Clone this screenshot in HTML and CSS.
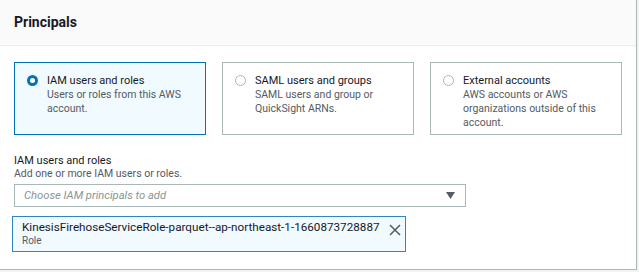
FILE: index.html
```html
<!DOCTYPE html>
<html>
<head>
<meta charset="utf-8">
<link rel="stylesheet" href="styles.css">
</head>
<body>
<div class="panel">
  <div class="header"><h2 class="title">Principals</h2></div>
  <div class="content">
    <div class="tiles">
      <div class="tile selected">
        <span class="radio on"></span>
        <div class="tile-text">
          <div class="tile-title">IAM users and roles</div>
          <div class="tile-desc">Users or roles from this AWS account.</div>
        </div>
      </div>
      <div class="tile">
        <span class="radio"></span>
        <div class="tile-text">
          <div class="tile-title">SAML users and groups</div>
          <div class="tile-desc">SAML users and group or QuickSight ARNs.</div>
        </div>
      </div>
      <div class="tile">
        <span class="radio"></span>
        <div class="tile-text">
          <div class="tile-title">External accounts</div>
          <div class="tile-desc">AWS accounts or AWS organizations outside of this account.</div>
        </div>
      </div>
    </div>
    <div class="field">
      <div class="label">IAM users and roles</div>
      <div class="hint">Add one or more IAM users or roles.</div>
      <div class="select">
        <span class="placeholder">Choose IAM principals to add</span>
        <svg class="caret" width="9" height="7" viewBox="0 0 9 7"><path d="M0 0H9L4.5 7Z" fill="#545b64"/></svg>
      </div>
      <div class="token">
        <div class="token-text">
          <div class="token-name">KinesisFirehoseServiceRole-parquet--ap-northeast-1-1660873728887</div>
          <div class="token-sub">Role</div>
        </div>
        <svg class="close" width="12" height="12" viewBox="0 0 12 12"><path d="M1 1L11 11M11 1L1 11" stroke="#545b64" stroke-width="1.5" fill="none"/></svg>
      </div>
    </div>
  </div>
</div>
</body>
</html>
```
FILE: styles.css
```css
* { box-sizing: border-box; }
html, body { margin: 0; padding: 0; }
body {
  background: #f2f3f3;
  font-family: Roboto, "Noto Sans", sans-serif;
  color: #16191f;
  width: 639px;
  height: 272px;
  overflow: hidden;
}
.panel {
  width: 637px;
  height: 270px;
  background: #fff;
  border-right: 1px solid #aab7b8;
  border-bottom: 1px solid #aab7b8;
}
.header {
  height: 46px;
  background: #fafafa;
  border-bottom: 1px solid #eaeded;
  display: flex;
  align-items: center;
  padding-left: 14px;
  padding-bottom: 2px;
}
.title {
  margin: 0;
  font-size: 14px;
  font-weight: 700;
}
.content {
  padding: 16px 14px 0 14px;
}
.tiles {
  display: flex;
  gap: 16px;
}
.tile {
  width: 192px;
  height: 73px;
  border: 1px solid #aab7b8;
  display: flex;
  gap: 9px;
  padding: 11px 10px 0 12px;
}
.tile.selected {
  background: #f1faff;
  border-color: #0073bb;
}
.radio {
  flex: none;
  width: 11px;
  height: 11px;
  border: 1px solid #aab7b8;
  border-radius: 50%;
  margin-top: 1px;
  background: #fff;
}
.radio.on {
  border: 3px solid #0073bb;
}
.tile-title {
  font-size: 11px;
  line-height: 14px;
}
.tile-desc {
  font-size: 10.5px;
  line-height: 14px;
  color: #545b64;
}
.field {
  margin-top: 19px;
}
.label {
  font-size: 11px;
  line-height: 14px;
}
.hint {
  font-size: 10.5px;
  line-height: 12px;
  color: #545b64;
}
.select {
  margin-top: 4px;
  width: 452px;
  height: 23px;
  border: 1px solid #aab7b8;
  display: flex;
  align-items: center;
  justify-content: space-between;
  padding: 0 10px 0 9px;
}
.placeholder {
  font-size: 11.2px;
  font-style: italic;
  color: #879596;
}
.token {
  margin-top: 9px;
  margin-left: -2px;
  width: 394px;
  height: 36px;
  background: #f1faff;
  border: 1px solid #3184c2;
  display: flex;
  align-items: center;
  gap: 9px;
  padding: 0 7px 0 9px;
}
.token-text { flex: 1; }
.token-name {
  font-size: 11.7px;
  line-height: 14px;
  white-space: nowrap;
}
.token-sub {
  font-size: 10px;
  line-height: 14px;
  color: #545b64;
}
.close { flex: none; margin-top: -9px; }
```
